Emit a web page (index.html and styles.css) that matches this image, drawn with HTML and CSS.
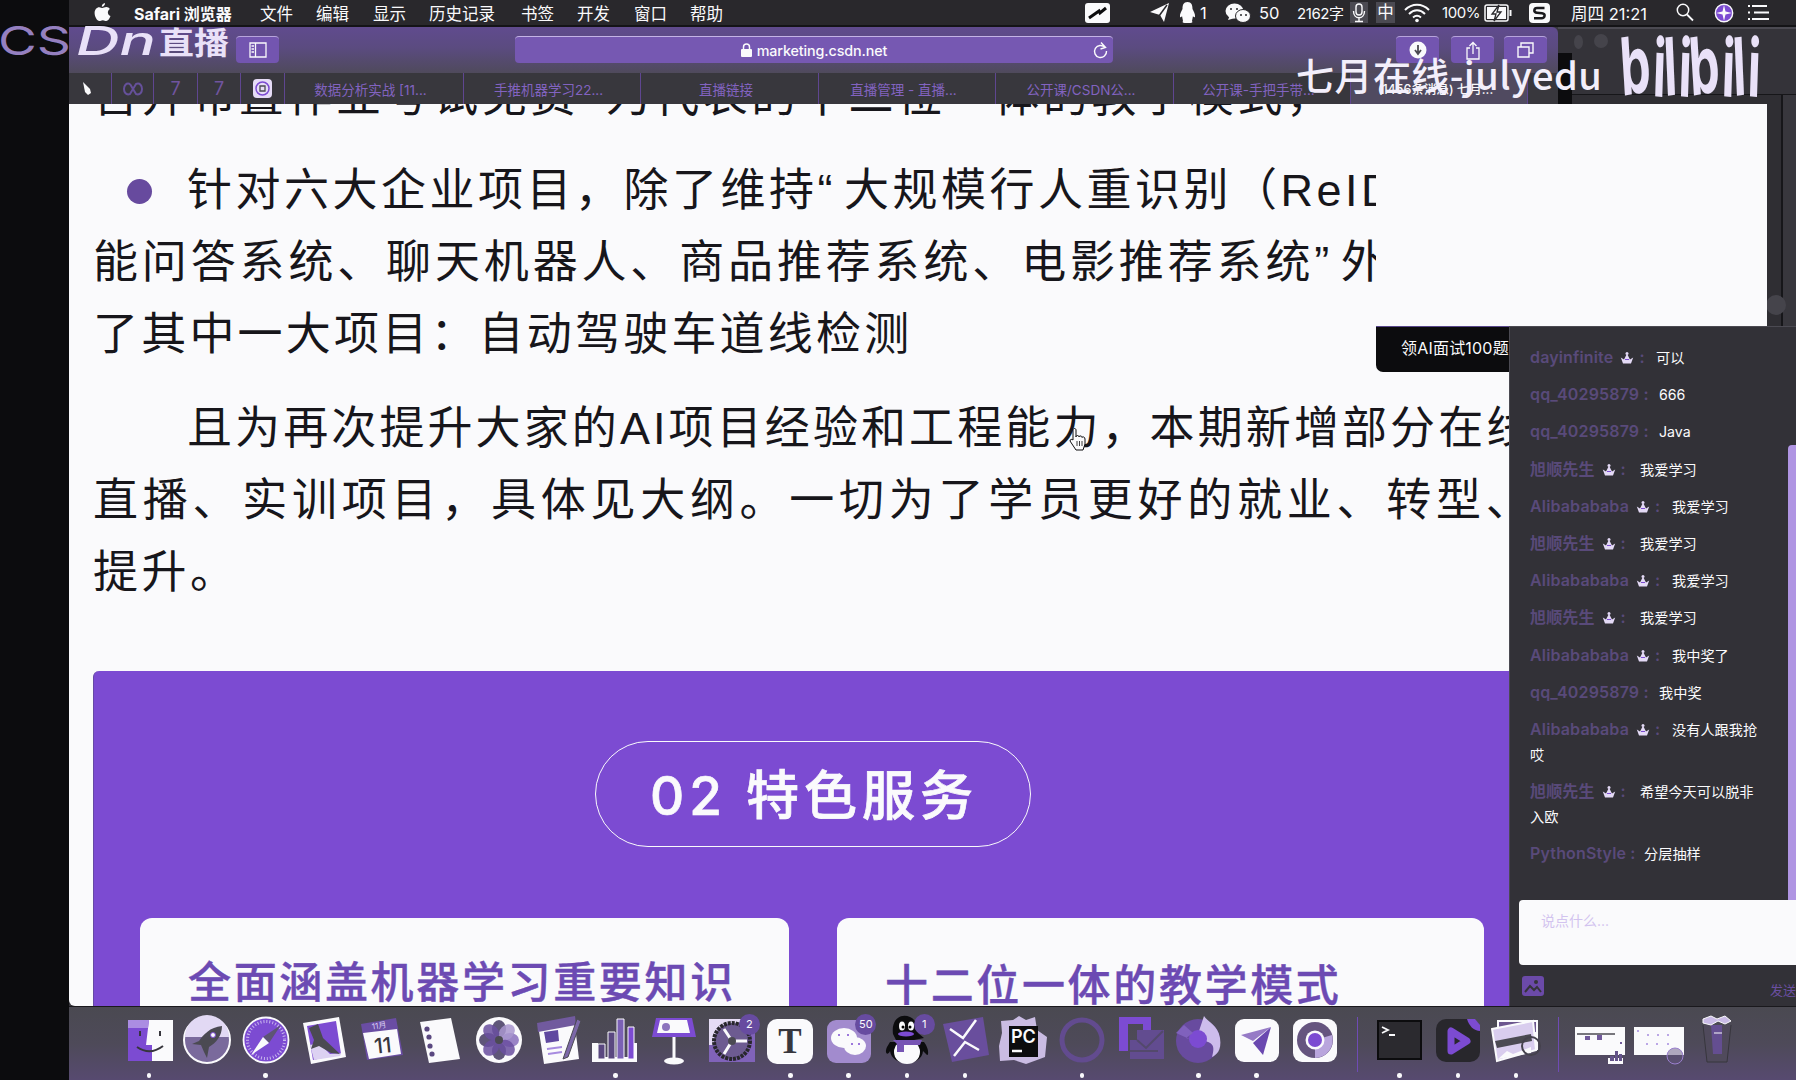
FILE: index.html
```html
<!DOCTYPE html>
<html lang="zh-CN">
<head>
<meta charset="utf-8">
<title>CSDN 直播</title>
<link rel="stylesheet" href="styles.css">
</head>
<body>
<svg class="defs" width="0" height="0">
  <symbol id="crown" viewBox="0 0 14 14"><path d="M3 12.500L.8 6.500 4 8.500 6.300 4h1.400L10 8.500l3.200-2L11 12.500z" fill="currentColor"/><circle cx="7" cy="2.500" r="1.500" fill="currentColor"/><path d="M5 8.500h4" stroke="#7c4bd2"/></symbol>
</svg>
<div class="screen">
  <header class="menubar">
    <svg width="17" height="19" viewBox="0 0 17 19"><path d="M11 0c.2 2-1.300 3.700-3.200 3.800C7.600 2 9.200.3 11 0zM8.500 5c1 0 2-1 3.800-1 1.500 0 2.900.8 3.600 2-3 1.800-2.500 5.800.6 7-.8 2.400-2.500 5-4.200 5-1.300 0-1.800-.8-3.500-.8s-2.200.8-3.400.8C3 18 .6 13.500.6 10 .6 6.500 2.800 4.200 5.200 4.200c1.500 0 2.500.8 3.300.8z" fill="#fafafc"/></svg>
    <b>Safari 浏览器</b><span>文件</span><span>编辑</span><span>显示</span><span>历史记录</span><span>书签</span><span>开发</span><span>窗口</span><span>帮助</span>
    <svg width="25" height="20" viewBox="0 0 25 20"><rect width="25" height="20" rx="3" fill="#fafafc"/><path d="M4 15l10-7 1 2 6-5" stroke="#0c0c0e" stroke-width="3" fill="none"/></svg>
    <svg width="19" height="20" viewBox="0 0 19 20"><path d="M0 9L19 0 14 19 10 12z" fill="#fafafc"/><path d="M9 13l8-11" stroke="#29282c" stroke-width="1.500"/></svg>
    <svg width="17" height="21" viewBox="0 0 17 21"><path d="M8.500 0c4 0 5 3 5 7 1 2 3 5 2.500 8-1 1-2-1-2-1l-1 5c1 1 0 2-1.500 2H5.500C4 21 3 20 4 19l-1-5s-1 2-2 1c-.5-3 1.500-6 2.500-8 0-4 1-7 5-7z" fill="#fafafc"/></svg>
    <span>1</span>
    <svg width="26" height="20" viewBox="0 0 26 20"><ellipse cx="9.500" cy="8" rx="9" ry="7.500" fill="#fafafc"/><path d="M3 17l2-5 5 3z" fill="#fafafc"/><ellipse cx="18" cy="13" rx="7.500" ry="6.500" fill="#fafafc" stroke="#29282c"/><g fill="#29282c"><circle cx="6" cy="6" r="1"/><circle cx="12" cy="6" r="1"/><circle cx="16" cy="12" r="1"/><circle cx="21" cy="12" r="1"/></g></svg>
    <span>50</span><span class="small">2162字</span>
    <svg width="18" height="21" viewBox="0 0 18 21"><rect width="18" height="21" fill="#4b4a52"/><rect x="6" y="2" width="6" height="11" rx="3" fill="none" stroke="#fafafc" stroke-width="1.400"/><path d="M3.500 9c0 9 11 9 11 0M9 16v3M5 19.500h8" fill="none" stroke="#fafafc" stroke-width="1.400"/></svg>
    <span class="ime">中</span>
    <svg width="26" height="20" viewBox="0 0 26 20"><path d="M1 7c7-7 17-7 24 0M5 11c5-5 11-5 16 0M9 14.500c3-2.500 5-2.500 8 0" fill="none" stroke="#fafafc" stroke-width="2"/><circle cx="13" cy="17.500" r="1.800" fill="#fafafc"/></svg>
    <span class="small">100%</span>
    <svg width="29" height="18" viewBox="0 0 29 18"><rect x="1" y="1" width="23" height="16" rx="2" fill="none" stroke="#fafafc" stroke-width="1.500"/><rect x="3" y="3" width="19" height="12" fill="#fafafc"/><path d="M15 1l-7 9h4l-2 7 7-9h-4z" fill="#fafafc" stroke="#29282c" stroke-width="1.300"/><path d="M26.500 6v6" stroke="#fafafc" stroke-width="2"/></svg>
    <svg width="21" height="20" viewBox="0 0 21 20"><rect width="21" height="20" rx="4" fill="#fafafc"/><path d="M15.500 5H8C5 5 4 9.500 8 9.800l5 .4c4 .4 3 5-.5 5H5" fill="none" stroke="#1b1a1e" stroke-width="2.600"/></svg>
    <span>周四 21:21</span>
    <svg width="18" height="19" viewBox="0 0 18 19"><circle cx="7" cy="7" r="5.700" fill="none" stroke="#fafafc" stroke-width="1.500"/><path d="M11 11.500l6 6" stroke="#fafafc" stroke-width="1.800"/></svg>
    <svg width="20" height="20" viewBox="0 0 20 20"><circle cx="10" cy="10" r="8.700" fill="#7c4bd2" stroke="#fafafc" stroke-width="1.400"/><path d="M10 2l1.500 6.500L18 10l-6.500 1.500L10 18l-1.500-6.500L2 10l6.500-1.500z" fill="#fafafc"/></svg>
    <svg width="21" height="17" viewBox="0 0 21 17"><path d="M0 2h2M4 2h15M0 8.500h2M6 8.500h15M0 15h2M4 15h17" stroke="#fafafc" stroke-width="2"/></svg>
  </header>

  <main class="workspace">
    <div class="backwin"><i class="blob b1"></i><i class="blob b2"></i><i class="shade"></i><i class="rule"></i><i class="blob b3"></i></div>

    <section class="browser">
      <div class="toolbar">
        <div class="btn"><svg width="18" height="16" viewBox="0 0 18 16"><path d="M1 1h16v14H1zM6.500 1v14M2.500 4h2.500M2.500 7h2.500M2.500 10h2.500" fill="none" stroke="#fafafc" stroke-width="1.300"/></svg></div>
        <div class="address">
          <svg width="11" height="14" viewBox="0 0 11 14"><rect y="6" width="11" height="8" rx="1" fill="#fafafc"/><path d="M2.500 7V4c0-4 6-4 6 0v3" fill="none" stroke="#fafafc" stroke-width="1.500"/></svg>
          <span>marketing.csdn.net</span>
          <svg class="reload" width="15" height="17" viewBox="0 0 15 17"><path d="M12 5.500A6 6 0 1 0 13.500 9" fill="none" stroke="#fafafc" stroke-width="1.400"/><path d="M8 .5l4.500 5-5 1.500" fill="none" stroke="#fafafc" stroke-width="1.400"/></svg>
        </div>
        <div class="btn"><svg width="18" height="18" viewBox="0 0 18 18"><circle cx="9" cy="9" r="8.500" fill="#fafafc"/><path d="M9 4v8M6 9l3 4 3-4" fill="none" stroke="#4b4a52" stroke-width="1.800"/></svg></div>
        <div class="btn"><svg width="16" height="19" viewBox="0 0 16 19"><path d="M5 7H2v11h12V7h-3M8 13V2M4.500 5L8 1.500 11.500 5" fill="none" stroke="#fafafc" stroke-width="1.300"/></svg></div>
        <div class="btn"><svg width="17" height="16" viewBox="0 0 17 16"><path d="M1 5h11v10H1zM4 5V1h12v10h-4" fill="none" stroke="#fafafc" stroke-width="1.400"/></svg></div>
      </div>
      <div class="tabs">
        <div class="tab"><svg width="10" height="14" viewBox="0 0 10 14"><path d="M1 0l7 7 1 4-3 2-3-3z" fill="#fafafc"/></svg></div>
        <div class="tab"><svg width="22" height="14" viewBox="0 0 22 14"><path d="M8 2C0-1 0 15 8 12l6-10c8-3 8 13 0 10L8 2" fill="none" stroke="#65509a" stroke-width="2"/></svg></div>
        <div class="tab seven">7</div>
        <div class="tab seven">7</div>
        <div class="tab"><svg width="19" height="19" viewBox="0 0 19 19"><rect width="19" height="19" rx="4" fill="#e6dcf7"/><circle cx="9.500" cy="9.500" r="6.500" fill="none" stroke="#7c4bd2" stroke-width="1.500"/><path d="M7 7h5v5H7z" fill="none" stroke="#4b4a52" stroke-width="1.300"/></svg></div>
        <div class="tab">数据分析实战 [11...</div>
        <div class="tab">手推机器学习22...</div>
        <div class="tab">直播链接</div>
        <div class="tab">直播管理 - 直播...</div>
        <div class="tab">公开课/CSDN公...</div>
        <div class="tab">公开课-手把手带...</div>
        <div class="tab active">(1456条消息) 七月...</div>
        <div class="tab last"></div>
      </div>
    </section>

    <article class="page">
      <div class="copy">
        <p class="l0">召开布置作业考试免费<span class="q">”</span>为代表的十二位一体的教学模式，</p>
        <p class="l1"><i class="bullet"></i><span>针对六大企业项目，除了维持<span class="q">“</span>大规模行人重识别（ReID</span></p>
        <p class="l2">能问答系统、聊天机器人、商品推荐系统、电影推荐系统<span class="q">”</span>外</p>
        <p class="l3">了其中一大项目：自动驾驶车道线检测</p>
      </div>
      <div class="copy wide">
        <p class="l4">且为再次提升大家的AI项目经验和工程能力，本期新增部分在线</p>
        <p class="l5">直播、实训项目，具体见大纲。一切为了学员更好的就业、转型、</p>
        <p class="l6">提升。</p>
      </div>
      <section class="feature">
        <h2>02 特色服务</h2>
        <div class="cards">
          <div class="card">全面涵盖机器学习重要知识</div>
          <div class="card low">十二位一体的教学模式</div>
        </div>
      </section>
    </article>

    <div class="tip">领AI面试100题</div>

    <aside class="chat">
      <div class="log">
        <p><b class="w126">dayinfinite<svg><use href="#crown"/></svg>:</b>可以</p>
        <p><b class="w129">qq_40295879 :</b>666</p>
        <p><b class="w129">qq_40295879 :</b>Java</p>
        <p><b class="w110">旭顺先生<svg><use href="#crown"/></svg>:</b>我爱学习</p>
        <p><b class="w142">Alibabababa<svg><use href="#crown"/></svg>:</b>我爱学习</p>
        <p><b class="w110">旭顺先生<svg><use href="#crown"/></svg>:</b>我爱学习</p>
        <p><b class="w142">Alibabababa<svg><use href="#crown"/></svg>:</b>我爱学习</p>
        <p><b class="w110">旭顺先生<svg><use href="#crown"/></svg>:</b>我爱学习</p>
        <p><b class="w142">Alibabababa<svg><use href="#crown"/></svg>:</b>我中奖了</p>
        <p><b class="w129">qq_40295879 :</b>我中奖</p>
        <p><b class="w142">Alibabababa<svg><use href="#crown"/></svg>:</b>没有人跟我抢哎</p>
        <p><b class="w110">旭顺先生<svg><use href="#crown"/></svg>:</b>希望今天可以脱非入欧</p>
        <p><b class="w114">PythonStyle :</b>分层抽样</p>
      </div>
      <i class="thumb"></i>
      <div class="input">说点什么...</div>
      <div class="tools">
        <svg width="22" height="20" viewBox="0 0 22 20"><rect width="22" height="20" rx="3" fill="#6b4aa8"/><path d="M3 16l5-6 4 4 3-3 4 5" fill="none" stroke="#35343a" stroke-width="2"/><circle cx="14" cy="6" r="2" fill="#35343a"/></svg>
        <span>发送</span>
      </div>
    </aside>

    <svg class="hand" width="19" height="24" viewBox="0 0 19 24"><path d="M5 13V3c0-2 3-2 3 0v7c0-2 3-2 3 0 0-1.500 3-1.500 3 .5 0-1 3-1 3 1.500v5l-2 6H8l-6-9c0-2 2-2 3-1z" fill="#fafafc" stroke="#0c0c0e"/><path d="M9 14v5M11.500 14v5M14 14v5" stroke="#0c0c0e" stroke-width=".8"/></svg>
  </main>

  <footer class="dock">
    <div class="app on"><svg viewBox="0 0 50 50"><path d="M4 5h45v41H4z" fill="#fafafc"/><path d="M4 5h21l-3 25h6v16H4z" fill="#7c4bd2"/><path d="M4 5h21l-1 8H4z" fill="#ab8de2"/><path d="M13 32q13 9 26-1M16 16v5M36 16v5" fill="none" stroke="#37363d" stroke-width="2"/></svg></div>
    <div class="app"><svg viewBox="0 0 50 50"><circle cx="25" cy="25" r="23" fill="#7a6a9c" stroke="#fafafc" stroke-width="2"/><path d="M3 22a22 22 0 0 1 44 0z" fill="#e2d9f4"/><path d="M40 11c-12 1-19 9-23 15l-7 3 9 1 3 7 3 6 2-11c7-4 13-11 13-21z" fill="#4b4a52"/><circle cx="31" cy="20" r="2.500" fill="#fafafc" stroke="#7c4bd2"/></svg></div>
    <div class="app on"><svg viewBox="0 0 50 50"><circle cx="25" cy="25" r="22.500" fill="#7c4bd2" stroke="#fafafc" stroke-width="1.800"/><circle cx="25" cy="25" r="18.500" fill="none" stroke="#c9b7ed" stroke-width="3" stroke-dasharray="1 2"/><path d="M40 10L28 28l-6-6z" fill="#5d5474"/><path d="M10 40l18-12-6-6z" fill="#fafafc"/></svg></div>
    <div class="app"><svg viewBox="0 0 50 50"><path d="M4 8l36-6 7 40-35 7z" fill="#fafafc"/><path d="M8 11l29-5 5 33-28 6z" fill="#7c4bd2"/><path d="M11 30l9-2 11 11 11-1-1 3-26 4z" fill="#dcd1f2"/><path d="M10 13l9-4 5 14 17 16-9-1-12-7-8 3 3-9z" fill="#4b4a52"/></svg></div>
    <div class="app"><svg viewBox="0 0 50 50"><path d="M4 9l35-6 7 37-36 5z" fill="#6a4da3"/><path d="M6 18l34-4 4 25-32 5z" fill="#fafafc"/><text x="17" y="38" font-size="21" font-weight="500" transform="rotate(-6 25 30)" fill="#37363d">11</text><text x="15" y="13" font-size="8" transform="rotate(-8 25 12)" fill="#d9cdf2">11月</text></svg></div>
    <div class="app"><svg viewBox="0 0 50 50"><path d="M5 7l31-4 9 41-31 4z" fill="#fafafc"/><g fill="#5a4880"><circle cx="12" cy="14" r="2.600"/><circle cx="14" cy="22" r="2.600"/><circle cx="15" cy="31" r="2.600"/><circle cx="17" cy="39" r="2.600"/></g></svg></div>
    <div class="app"><svg viewBox="0 0 50 50"><circle cx="25" cy="25" r="23" fill="#fafafc"/><g fill="#5f5679"><ellipse cx="25" cy="14" rx="7" ry="9"/><ellipse cx="25" cy="36" rx="7" ry="9"/><ellipse cx="14" cy="25" rx="9" ry="7"/><ellipse cx="36" cy="25" rx="9" ry="7" fill="#9a84c6"/></g><g fill="#6a4fa0" opacity=".85" transform="rotate(45 25 25)"><ellipse cx="25" cy="14" rx="7" ry="9" fill="#a997cf"/><ellipse cx="25" cy="36" rx="7" ry="9"/><ellipse cx="14" cy="25" rx="9" ry="7"/><ellipse cx="36" cy="25" rx="9" ry="7"/></g><circle cx="25" cy="25" r="4" fill="#4b4a52"/></svg></div>
    <div class="app"><svg viewBox="0 0 50 50"><path d="M6 10l36-8 5 42-35 5z" fill="#fafafc"/><path d="M5 8l38-7 1 9-38 7z" fill="#715a9e"/><path d="M12 17l14-2 1 11-13 2z" fill="#6049a0"/><path d="M15 34l15-2M16 39l14-2" stroke="#a78be0" stroke-width="2"/><path d="M45 4L31 44l5-2L49 6z" fill="#7c68a8" stroke="#4b4a52"/></svg></div>
    <div class="app on"><svg viewBox="0 0 50 50"><path d="M2 28h6v14h36V28h3v19H2z" fill="#fafafc"/><g stroke="#fafafc"><path d="M8 29h7v15H8z" fill="#5a4880"/><path d="M18 17h7v27h-7z" fill="#5a4880"/><path d="M27 4h7v40h-7z" fill="#7b61b5"/><path d="M38 12h6v32h-6z" fill="#7c4bd2"/></g></svg></div>
    <div class="app"><svg viewBox="0 0 50 50"><path d="M7 3h36l4 19H3z" fill="#7c4bd2"/><path d="M11 5h27l3 13H8z" fill="#fafafc"/><circle cx="17" cy="12" r="4" fill="#8d74bd"/><path d="M25 22v23" stroke="#fafafc" stroke-width="3"/><ellipse cx="25" cy="46" rx="10" ry="3.500" fill="#fafafc"/></svg></div>
    <div class="app"><svg viewBox="0 0 50 50"><path d="M2 4h46v43H2z" fill="#8063b9"/><path d="M2 4h34L10 30H2z" fill="#e5dcf5"/><circle cx="25" cy="26" r="18" fill="#6d5b91" stroke="#28272c" stroke-width="4" stroke-dasharray="3 1"/><path d="M25 26L17 14M25 26h15M25 26l-8 13" stroke="#fafafc" stroke-width="3"/><circle cx="25" cy="26" r="4" fill="#4b4a52"/></svg><em>2</em></div>
    <div class="app on"><svg viewBox="0 0 50 50"><rect x="2" y="4" width="46" height="45" rx="10" fill="#fafafc"/><text x="25" y="38" text-anchor="middle" font-family="Liberation Serif,serif" font-size="35" font-weight="700" fill="#37363d">T</text></svg></div>
    <div class="app on"><svg viewBox="0 0 50 50"><rect x="3" y="5" width="44" height="43" rx="9" fill="#a28bce"/><ellipse cx="20" cy="23" rx="13" ry="10" fill="#fafafc"/><ellipse cx="31" cy="31" rx="11" ry="9" fill="#fafafc"/><g fill="#7c4bd2"><circle cx="15" cy="20" r="1"/><circle cx="24" cy="20" r="1"/><circle cx="28" cy="29" r="1"/><circle cx="35" cy="29" r="1"/></g></svg><em>50</em></div>
    <div class="app on"><svg viewBox="0 0 50 50"><path d="M11 19C9 4 19-2 28 2c7 3 7 10 8 16l6 5-10 2H14z" fill="#0c0c0e"/><path d="M8 27h34c6 8 4 14 3 13l-4-4c-1 16-31 16-33 0-2 5-6 3-3-4z" fill="#0c0c0e"/><ellipse cx="25" cy="37" rx="13" ry="12" fill="#fafafc"/><ellipse cx="20" cy="11" rx="3" ry="4.500" fill="#fafafc"/><ellipse cx="29" cy="11" rx="3" ry="4.500" fill="#fafafc"/><circle cx="21" cy="12" r="1.500"/><circle cx="28" cy="12" r="1.500"/><ellipse cx="24" cy="19" rx="8" ry="2.500" fill="#7c4bd2"/><path d="M11 25h29l-2 5H22v7h-7v-8z" fill="#7654b4"/></svg><em>1</em></div>
    <div class="app on"><svg viewBox="0 0 50 50"><path d="M3 9l40-7 6 38-37 7z" fill="#694e9d"/><path d="M10 14l13 9 13-18M14 41l11-14 14 8" fill="none" stroke="#fafafc" stroke-width="2.500"/></svg></div>
    <div class="app"><svg viewBox="0 0 50 50"><path d="M3 6l12-1 6-4 7 4 9-3 2 13 10 7-2 20-8 3-11 4-12-4-14 1-1-15 3-13z" fill="#cabce3"/><path d="M11 11h29v31H11z" fill="#0c0c0e"/><text x="13" y="28" font-size="18" font-weight="600" fill="#fafafc">PC</text><path d="M14 36h10" stroke="#fafafc" stroke-width="2.500"/></svg></div>
    <div class="app on"><svg viewBox="0 0 50 50"><circle cx="25" cy="25" r="20" fill="none" stroke="#624b8f" stroke-width="5"/></svg></div>
    <div class="app"><svg viewBox="0 0 50 50"><path d="M4 36V2h32v13h-8V9H13v27z" fill="#7c4bd2"/><path d="M22 15h27v29H15V25h7z" fill="#624c90"/><path d="M22 25l9 8 17-17M15 36h28" stroke="#53496c" stroke-width="2" fill="none"/></svg></div>
    <div class="app on"><svg viewBox="0 0 50 50"><circle cx="25" cy="26" r="22" fill="#684b9f"/><path d="M31 1c4 6 14 9 16 22s-4 17-8 19c4-13-1-14-7-16l-7-7z" fill="#cdbcec"/><circle cx="25" cy="24" r="9" fill="#7c4bd2"/><path d="M3 18l8-8 9 8-7 5 8 3" fill="#8061bd"/></svg></div>
    <div class="app on"><svg viewBox="0 0 50 50"><rect x="3" y="4" width="44" height="43" rx="9" fill="#fafafc"/><path d="M9 20l30-8-18 14z" fill="#967ac6"/><path d="M39 12l-8 28-10-12z" fill="#6a48b0"/></svg></div>
    <div class="app"><svg viewBox="0 0 50 50"><rect x="3" y="4" width="44" height="43" rx="9" fill="#fafafc"/><circle cx="25" cy="25" r="18" fill="#65547f"/><path d="M25 25l17-5a18 18 0 0 1-17 23z" fill="#b9a5dd"/><circle cx="25" cy="25" r="9.500" fill="#fafafc"/><circle cx="25" cy="25" r="7" fill="#7c4bd2"/></svg></div>
    <i class="sep"></i>
    <div class="app on"><svg viewBox="0 0 50 50"><path d="M3 5h45v40H3z" fill="#0c0c0e"/><path d="M5 7h41v36H5z" fill="#2b2a2f"/><path d="M8 12l6 3-6 3M15 20h6" fill="none" stroke="#fafafc" stroke-width="1.800"/></svg></div>
    <div class="app on"><svg viewBox="0 0 50 50"><rect x="3" y="4" width="44" height="43" rx="10" fill="#28272c"/><path d="M18 16v20l16-10z" fill="none" stroke="#7c4bd2" stroke-width="7" stroke-linejoin="round"/><path d="M34 4h8l5 6v6c-6 0-11-5-13-12z" fill="#7c4bd2"/></svg></div>
    <div class="app on"><svg viewBox="0 0 50 50"><path d="M6 5h41v30H6z" fill="#fafafc"/><path d="M8 7h37v10L8 20z" fill="#6c568f"/><path d="M1 14l41-8 3 29L6 46z" fill="#d9cdee" stroke="#fafafc" stroke-width="2"/><path d="M4 26l36-7 1 7-35 7z" fill="#4b4a52"/><path d="M7 44l9-8 6 3 18-7v6z" fill="#fafafc"/><circle cx="40" cy="31" r="9" fill="none" stroke="#45424d" stroke-width="2"/></svg></div>
    <i class="sep"></i>
    <div class="app"><svg viewBox="0 0 50 50"><path d="M0 12h50v28H0z" fill="#fafafc"/><path d="M2 19h38" stroke="#4b4a52" stroke-width="1.500"/><path d="M10 21h5v4h-5zM22 20h5v5h-5zM45 27h2v2h-2z" fill="#715a9b"/><path d="M33 43h15v6H33z" fill="#fafafc"/><path d="M35 41h4v5h-4zM40 36h3v10h-3zM44 39h3v7h-3z" fill="#64538a"/></svg></div>
    <div class="app"><svg viewBox="0 0 50 50"><path d="M0 12h50v28H0z" fill="#fafafc"/><g fill="#a68bdf"><circle cx="4" cy="16" r="1"/><circle cx="14" cy="20" r="1"/><circle cx="24" cy="20" r="1"/><circle cx="34" cy="20" r="1"/><circle cx="13" cy="29" r="1"/><circle cx="23" cy="29" r="1"/><circle cx="34" cy="29" r="1"/></g><circle cx="41" cy="41" r="8" fill="#63568080" stroke="#9b80cf"/></svg></div>
    <div class="app"><svg viewBox="0 0 50 50"><path d="M11 10l4 37h20l4-37" fill="#504a5c" stroke="#37363d"/><path d="M19 10h11v29h-9z" fill="#644e91"/><path d="M11 4l8-3 6 3 8-3 6 5-6 3-7-3-7 4-8-2z" fill="#cabbe7" stroke="#fafafc"/><path d="M22 18h8" stroke="#fafafc"/></svg></div>
  </footer>
</div>

<svg class="mark brand" width="232" height="40" viewBox="0 0 232 40">
  <text class="on-dark" x="-2" y="34" textLength="73" lengthAdjust="spacingAndGlyphs">CS</text>
  <text class="on-light" x="76" y="34" textLength="80" lengthAdjust="spacingAndGlyphs">Dn</text>
  <text class="live" x="159" y="33" textLength="70" lengthAdjust="spacingAndGlyphs">直播</text>
</svg>
<div class="mark uploader">七月在线-julyedu</div>
<svg class="mark bili" width="150" height="74" viewBox="0 0 150 74"><text x="4" y="65" textLength="138" lengthAdjust="spacingAndGlyphs" rotate="-6 3 -4 3 -6 3 -4 3">bilibili</text></svg>
</body>
</html>
```
FILE: styles.css
```css
* { box-sizing: border-box; }
body {
  margin: 0; width: 1796px; height: 1080px; overflow: hidden; position: relative;
  background: #0c0c0e; color: #fafafc;
  font-family: Inter, "Noto Sans CJK SC", sans-serif;
}
p, h2 { margin: 0; }
.defs { position: absolute; }
.screen {
  margin-left: 69px; width: 1727px; height: 1080px;
  display: grid; grid-template-rows: 27px 979px 74px;
}

/* menu bar */
.menubar {
  display: grid; align-items: center; white-space: nowrap;
  grid-template-columns: 40px 126px 56px 57px 56px 92px 56px 57px 56px 395px 65px 29px 21px 25px 34px 38px 53px 26px 28px 38px 42px 45px 42px 105px 38px 34px 22px;
  padding-left: 25px; background: #29282c; border-bottom: 2px solid #141417;
  font-size: 16.500px;
}
.menubar b { font-weight: 700; font-size: 16px; }
.menubar .small { font-size: 15px; letter-spacing: -.4px; }
.ime { background: #4b4a52; width: 19px; height: 21px; line-height: 21px; text-align: center; }

.workspace { position: relative; overflow: hidden; background: #38373d; }

/* window behind the browser */
.backwin { position: absolute; right: 0; top: 0; width: 238px; height: 300px; background: #343339; border-top: 2px solid #4b4a52; }
.shade { position: absolute; left: 0; top: 24px; width: 14px; height: 53px; background: #0c0c0e; }
.rule { position: absolute; left: 14px; right: 0; top: 65px; height: 235px; border-top: 1px solid #161619; background: linear-gradient(90deg, #2f2e33 209px, #161619 209px 211px, #38373d 211px); }
.blob { position: absolute; border-radius: 50%; background: #45444b; width: 14px; height: 14px; }
.b1 { left: 16px; top: 6px; width: 9px; } .b2 { left: 36px; top: 5px; } .b3 { right: 10px; bottom: 12px; width: 20px; height: 20px; }

/* browser chrome */
.browser { position: absolute; left: 0; top: 0; width: 1489px; height: 77px; border-radius: 0 6px 0 0; overflow: hidden; }
.toolbar {
  height: 46px; padding: 9px 12px 10px 167px; display: grid;
  grid-template-columns: 279px 881px 55px 53px 42px;
  background: linear-gradient(#604b8e, #5b4b80 45%, #4f4a5c);
}
.btn { width: 43px; height: 27px; border-radius: 4px; background: #7355b0; border-top: 1px solid #b7a4dc; display: flex; align-items: center; justify-content: center; }
.address {
  width: 598px; height: 27px; border-radius: 4px; background: #7658b2; border-top: 1px solid #c4b3e6;
  display: flex; align-items: center; justify-content: center; gap: 5px; font-size: 14.300px; font-weight: 500; position: relative;
}
.address span { letter-spacing: -.1px; }
.reload { position: absolute; right: 5px; top: 5px; }
.tabs {
  height: 31px; display: grid; background: #38373d;
  grid-template-columns: 43px 42px 44px 43px 44px 179px 177px 178px 177px 178px 177px 177px 30px;
  font-size: 13.500px; color: #8263c0;
}
.tab { border-right: 1px solid #5f4691; display: flex; align-items: center; justify-content: center; white-space: nowrap; padding-right: 7px; }
.seven { font-size: 18px; padding-right: 0; color: #70549f; }
.tab:nth-child(2), .tab:nth-child(5) { padding-right: 0; }
.tab.active { background: #504a60; color: #fafafc; font-weight: 500; font-size: 12.500px; }
.tab.last { border: 0; }

/* page */
.page { position: absolute; left: 0; top: 77px; width: 1698px; height: 902px; background: #fafafc; overflow: hidden; border-radius: 0 0 0 6px; }
.copy { width: 1307px; overflow: hidden; margin-top: -43px; color: #17161b; font: 45px/72px "Liberation Sans", "Noto Sans CJK SC", sans-serif; white-space: nowrap; padding-left: 24px; }
.copy.wide { margin-top: 22px; width: 1450px; }
.copy p { height: 72px; }
.q { letter-spacing: 11.500px; }
.copy .l0 { letter-spacing: 3.600px; margin-bottom: 22px; }
.l1 { letter-spacing: 3.500px; display: flex; align-items: center; }
.l2 { letter-spacing: 3.850px; }
.l3 { letter-spacing: 3.200px; }
.l4 { letter-spacing: 3.100px; padding-left: 94px; }
.l5 { letter-spacing: 4.740px; }
.l6 { letter-spacing: 3.500px; }
.bullet { width: 25px; height: 25px; border-radius: 50%; background: #674a9e; margin: 0 35px 0 34px; flex: none; }
.feature { margin: 62px 0 0 24px; height: 340px; width: 1500px; background: #7c4bd2; border-radius: 6px 0 0 0; overflow: hidden; padding-top: 70px; border-left: 1px solid #6649a5; }
.feature h2 {
  width: 436px; height: 106px; margin-left: 501px; border: 1.500px solid #fafafc; border-radius: 53px;
  display: flex; align-items: center; justify-content: center; font-size: 53px; font-weight: 500; letter-spacing: 5px; padding: 0 0 5px 2px; white-space: pre;
  -webkit-text-stroke: .7px #fafafc;
}
.cards { display: grid; grid-template-columns: 649px 647px; gap: 48px; padding: 71px 0 0 46px; }
.card { height: 110px; background: #fafafc; border-radius: 12px; color: #6c4ab3; font-size: 43px; font-weight: 500; letter-spacing: 2.650px; padding: 31px 0 0 48px; line-height: 66px; white-space: nowrap; -webkit-text-stroke: .4px #6c4ab3; }
.card.low { padding-top: 34px; }

.tip { position: absolute; left: 1307px; top: 299px; width: 140px; height: 46px; background: #0c0c0e; border-radius: 0 0 0 7px; padding-left: 25px; line-height: 42px; font-size: 16px; white-space: nowrap; letter-spacing: .2px; border-top: 1px solid #57468a; }

/* chat */
.chat { position: absolute; left: 1440px; top: 299px; width: 287px; height: 680px; background: #323137; border-top: 1px solid #4b4a52; border-left: 1px solid #4b4a52; overflow: hidden; }
.log { height: 573px; padding: 18px 0 0 20px; display: flex; flex-direction: column; gap: 12.200px; font-size: 14.200px; line-height: 25px; }
.log p { width: 236px; }
.log b { display: inline-block; white-space: nowrap; font-weight: 600; font-size: 16px; letter-spacing: .15px; color: #594a7a; line-height: 25px; }
.log svg { width: 14px; height: 14px; color: #e4daf6; margin: 0 5px 0 7px; vertical-align: -2px; }
.w126 { width: 126px; } .w129 { width: 129px; } .w110 { width: 110px; } .w142 { width: 142px; } .w114 { width: 114px; }
.thumb { position: absolute; right: 0; top: 118px; width: 8px; height: 456px; background: #b095e3; border-radius: 4px 0 0 0; }
.input { position: relative; margin-left: 9px; height: 65px; background: #fafafc; border-radius: 4px 0 0 4px; color: #d2c3ef; font-size: 14px; padding: 10px 22px; line-height: 22px; }
.tools { display: flex; justify-content: space-between; padding: 11px 0 0 12px; color: #6a4fa0; font-size: 13px; }
.tools span { padding-top: 4px; }
.hand { position: absolute; left: 999px; top: 400px; }

/* dock */
.dock { display: flex; padding-left: 50.800px; background: linear-gradient(#4a4951, #4e4a59 50%, #574a70); border-top: 1px solid #1a191d; }
.app { width: 58.300px; flex: none; position: relative; padding: 8px 0 0 4.150px; }
.app svg { width: 50px; height: 50px; display: block; }
.app.on::after { content: ""; position: absolute; left: 27px; top: 66px; width: 4.500px; height: 4.500px; border-radius: 50%; background: #fafafc; }
.app em { position: absolute; left: 36px; top: 7px; width: 21px; height: 21px; border-radius: 50%; background: #674ba0; font-style: normal; font-size: 11px; line-height: 20px; text-align: center; }
.sep { width: 26.200px; flex: none; margin: 10px 0 8px; background: linear-gradient(#6f4bb5, #6f4bb5) center / 1px 100% no-repeat; }

/* stream watermarks */
.mark { position: absolute; }
.brand { left: 0; top: 21px; font-size: 40px; }
.brand .on-dark { fill: #9580c0; }
.brand .on-light { font-style: italic; font-weight: 500; fill: #e9e1f8; }
.brand .live { font-size: 31px; font-weight: 700; fill: #e9e1f8; }
.uploader { left: 1296px; top: 46px; font: 500 38px/56px "Noto Sans CJK SC", sans-serif; letter-spacing: .45px; color: #f3effb; white-space: nowrap; }
.bili { left: 1618px; top: 31px; font-size: 80px; font-weight: 700; fill: #e9e1f8; }
```
